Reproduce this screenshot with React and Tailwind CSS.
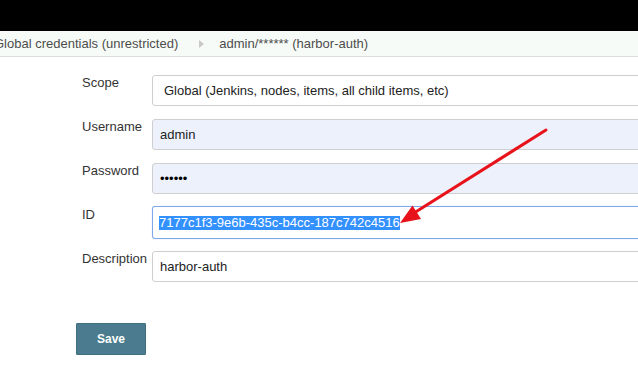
import React from 'react';

const font = { fontFamily: '"Liberation Sans", Arial, sans-serif' };

const Field = ({ label, children }) => (
  <div className="flex items-start">
    <div className="w-[70px] shrink-0 text-[13px] leading-4 text-[#333]">{label}</div>
    {children}
  </div>
);

const boxBase = 'h-[31px] w-[520px] shrink-0 rounded-[3px] border flex items-center text-[13px] text-[#222]';

const App = () => {
  return (
    <div className="relative w-[638px] h-[371px] overflow-hidden bg-white" style={font}>
      {/* barre du haut */}
      <div className="h-[31px] bg-black" />

      {/* fil d'ariane */}
      <div className="h-[26px] bg-[#f7fbf7] border-b border-[#dcdcdc] flex items-center text-[13px] text-[#4d4d4d] -ml-[6px]">
        <span>Global credentials (unrestricted)</span>
        <span className="ml-[21px] mr-[15px] w-0 h-0 border-y-[4px] border-y-transparent border-l-[5px] border-l-[#c8c8c8]" />
        <span>admin/****** (harbor-auth)</span>
      </div>

      {/* formulaire */}
      <div className="pl-[82px] pt-[18px] flex flex-col gap-[13px]">
        <Field label="Scope">
          <div className={`${boxBase} bg-white border-[#cfcfcf] pl-[11px]`}>
            Global (Jenkins, nodes, items, all child items, etc)
          </div>
        </Field>
        <Field label="Username">
          <div className={`${boxBase} bg-[#edf1fc] border-[#cfcfcf] pl-[7px]`}>admin</div>
        </Field>
        <Field label="Password">
          <div className={`${boxBase} bg-[#edf1fc] border-[#cfcfcf] pl-[7px] text-black`}>••••••</div>
        </Field>
        <Field label="ID">
          <div className={`${boxBase} h-[33px] -my-px bg-white border-[#7ea6e9] shadow-[0_0_1px_#9fbdf0] pl-[6px]`}>
            <span className="bg-[#3390ff] text-white leading-[14px]">7177c1f3-9e6b-435c-b4cc-187c742c4516</span>
          </div>
        </Field>
        <Field label="Description">
          <div className={`${boxBase} bg-white border-[#cfcfcf] pl-[7px]`}>harbor-auth</div>
        </Field>
      </div>

      <div className="pl-[76px] pt-[41px]">
        <button className="w-[70px] h-[32px] bg-[#4a7b8e] border border-[#3f6e80] text-white text-[12px] font-bold rounded-[1px]">
          Save
        </button>
      </div>

      {/* flèche rouge */}
      <svg className="absolute left-0 top-0 pointer-events-none" width="638" height="371">
        <line x1="546" y1="130" x2="414" y2="213" stroke="#e8121b" strokeWidth="3" strokeLinecap="round" />
        <polygon points="400,223 421,219 412.5,205.5" fill="#e8121b" />
      </svg>
    </div>
  );
};

export default App;
